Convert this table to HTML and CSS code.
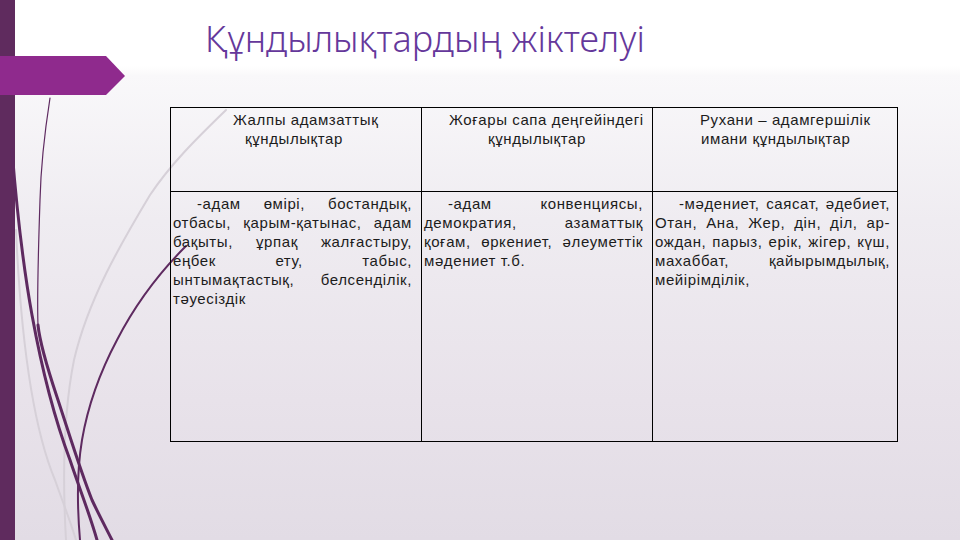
FILE: index.html
```html
<!DOCTYPE html>
<html lang="kk">
<head>
<meta charset="utf-8">
<title>Құндылықтардың жіктелуі</title>
<link rel="stylesheet" href="styles.css">
</head>
<body>
<div class="slide">
  <div class="bar"></div>
  <svg class="deco" width="960" height="540" viewBox="0 0 960 540" aria-hidden="true">
    <path class="grey" d="M226,110 C195,140 170,165 150,195 C120,245 88,300 74,360 C64,410 62,470 66,540"/>
    <path class="grey" d="M16,230 C20,320 30,420 55,480 C62,500 70,520 76,540"/>
    <path class="dark thin" d="M50,98 C45,130 41,160 40,200 C38,260 37,300 38,325"/>
    <path class="dark thick" d="M38,325 C40,345 48,370 57,397 C68,430 80,470 92,500 C99,515 106,528 112,540"/>
    <path class="dark thick" d="M12,150 C16,200 22,260 32,315 C42,370 55,420 70,460 C80,490 90,515 97,540"/>
    <path class="dark mid" d="M186,246 C160,272 135,305 117,340 C100,372 88,405 82,440 C77,470 77,505 80,540"/>
    <polygon class="arrow" points="0,56 106,56 125,76 106,95 0,95"/>
  </svg>
  <main class="content">
    <h1 class="title">Құндылықтардың жіктелуі</h1>
    <table class="values">
      <colgroup>
        <col class="w1"><col class="w2"><col class="w3">
      </colgroup>
      <tr class="head">
        <th>
          <span class="hl o62">Жалпы адамзаттық</span>
          <span class="hl o74">құндылықтар</span>
        </th>
        <th>
          <span class="hl o27">Жоғары сапа деңгейіндегі</span>
          <span class="hl o66">құндылықтар</span>
        </th>
        <th>
          <span class="hl o47">Рухани – адамгершілік</span>
          <span class="hl o48">имани құндылықтар</span>
        </th>
      </tr>
      <tr class="body">
        <td>
          <span class="ln first">-адам өмірі, бостандық,</span>
          <span class="ln">отбасы, қарым-қатынас, адам</span>
          <span class="ln">бақыты, ұрпақ жалғастыру,</span>
          <span class="ln">еңбек ету, табыс,</span>
          <span class="ln">ынтымақтастық, белсенділік,</span>
          <span class="ln last">тәуесіздік</span>
        </td>
        <td>
          <span class="ln first">-адам конвенциясы,</span>
          <span class="ln">демократия, азаматтық</span>
          <span class="ln">қоғам, өркениет, әлеуметтік</span>
          <span class="ln last">мәдениет т.б.</span>
        </td>
        <td class="c3">
          <span class="ln first">-мәдениет, саясат, әдебиет,</span>
          <span class="ln">Отан, Ана, Жер, дін, діл, ар-</span>
          <span class="ln">ождан, парыз, ерік, жігер, күш,</span>
          <span class="ln">махаббат, қайырымдылық,</span>
          <span class="ln last">мейірімділік,</span>
        </td>
      </tr>
    </table>
  </main>
</div>
</body>
</html>
```
FILE: styles.css
```css
html, body {
  margin: 0;
  padding: 0;
}

.slide {
  position: relative;
  width: 960px;
  height: 540px;
  overflow: hidden;
  display: flex;
  background: linear-gradient(to bottom, #ffffff 0px, #ffffff 66px, #f9f8fa 76px, #efecf1 220px, #e8e2ea 400px, #e2dce5 540px);
}

.bar {
  width: 15px;
  flex: 0 0 15px;
  background: #5f2b5e;
}

.deco {
  position: absolute;
  left: 0;
  top: 0;
  pointer-events: none;
}

.deco path {
  fill: none;
  stroke-linecap: round;
}

.deco .grey {
  stroke: #d6d0d8;
  stroke-width: 2;
}

.deco .dark {
  stroke: #5e2a60;
}

.deco .thin {
  stroke-width: 1.2;
}

.deco .mid {
  stroke-width: 2;
}

.deco .thick {
  stroke-width: 3;
}

.deco .arrow {
  fill: #8f2a8d;
}

.content {
  position: relative;
  z-index: 1;
  flex: 1;
}

.title {
  margin: 0;
  padding: 19px 0 0 190px;
  height: 41px;
  font-family: "Noto Sans", "DejaVu Sans", sans-serif;
  font-weight: 300;
  font-size: 36px;
  line-height: 40px;
  color: #65389b;
  white-space: nowrap;
}

.values {
  margin: 47px 0 0 155px;
  width: 727px;
  border-collapse: collapse;
  table-layout: fixed;
  font-family: "Liberation Sans", Arial, sans-serif;
  font-size: 15px;
  line-height: 19px;
  letter-spacing: 0.6px;
  color: #1c1c1c;
}

.w1 { width: 251px; }
.w2 { width: 231px; }
.w3 { width: 245px; }

.values th,
.values td {
  border: 1px solid #000;
  vertical-align: top;
  text-align: left;
  font-weight: normal;
  padding: 2px 9px 0 2px;
}

.values td.c3 {
  padding-right: 7px;
}

.head th {
  height: 81px;
  padding: 2px 0 0 0;
}

.body td {
  height: 247px;
}

.hl {
  display: block;
  white-space: nowrap;
}

.o62 { padding-left: 62px; }
.o74 { padding-left: 74px; }
.o27 { padding-left: 27px; }
.o66 { padding-left: 66px; }
.o47 { padding-left: 47px; }
.o48 { padding-left: 48px; }

.ln {
  display: block;
  white-space: nowrap;
  text-align: justify;
  text-align-last: justify;
}

.ln.first {
  text-indent: 24px;
}

.ln.last {
  text-align: left;
  text-align-last: left;
}
```
